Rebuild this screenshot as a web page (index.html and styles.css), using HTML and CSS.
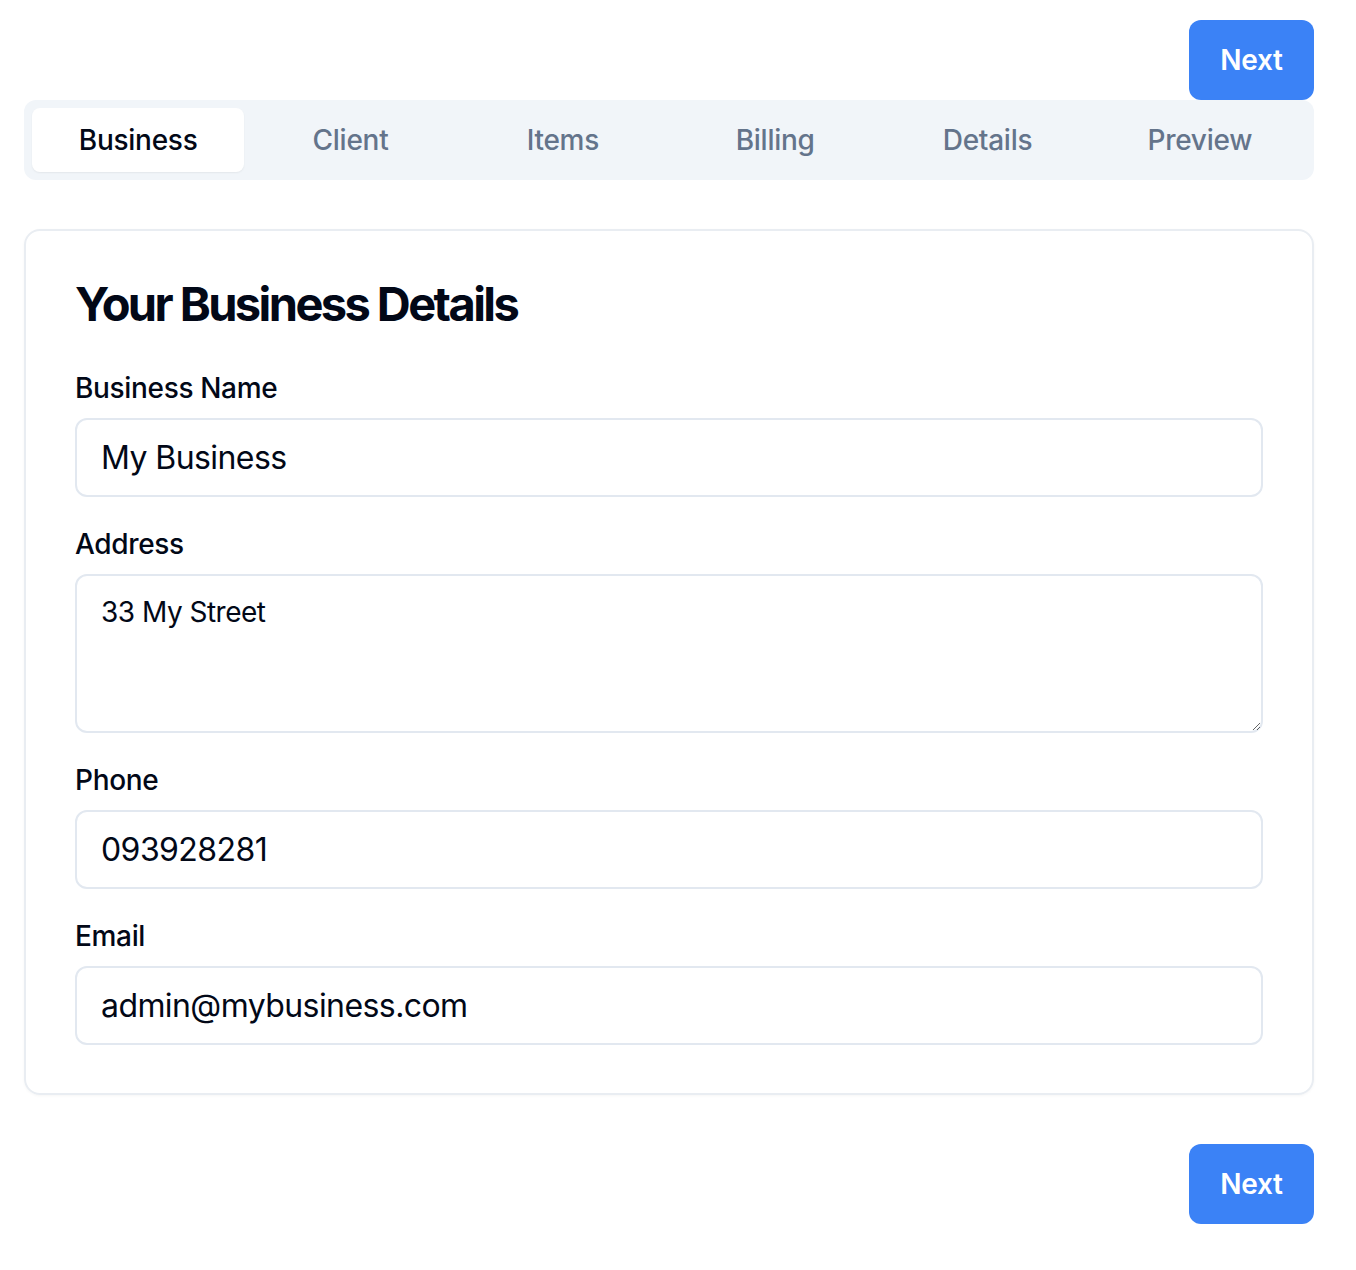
FILE: index.html
```html
<!DOCTYPE html>
<html lang="en">
<head>
    <meta charset="UTF-8">
    <meta name="viewport" content="width=device-width, initial-scale=1.0">
    <title>Invoice - Business</title>
    <link rel="stylesheet" href="styles.css">
</head>
<body>
    <div class="page">
        <div class="actions">
            <button class="btn-next" type="button">Next</button>
        </div>

        <!-- Steps of the invoice wizard -->
        <div class="tabs">
            <button class="tab active" type="button">Business</button>
            <button class="tab" type="button">Client</button>
            <button class="tab" type="button">Items</button>
            <button class="tab" type="button">Billing</button>
            <button class="tab" type="button">Details</button>
            <button class="tab" type="button">Preview</button>
        </div>

        <div class="card">
            <h2>Your Business Details</h2>
            <form class="fields">
                <div class="field">
                    <label for="name">Business Name</label>
                    <input type="text" id="name" value="My Business" />
                </div>
                <div class="field">
                    <label for="address">Address</label>
                    <textarea id="address">33 My Street</textarea>
                </div>
                <div class="field">
                    <label for="phone">Phone</label>
                    <input type="text" id="phone" value="093928281" />
                </div>
                <div class="field">
                    <label for="email">Email</label>
                    <input type="email" id="email" value="admin@mybusiness.com" />
                </div>
            </form>
        </div>

        <div class="actions bottom">
            <button class="btn-next" type="button">Next</button>
        </div>
    </div>
</body>
</html>
```

FILE: styles.css
```css
body {
    margin: 0;
    padding: 20px 42px 40px 24px;
    background: #ffffff;
    font-family: Inter, "Noto Sans", Arial, sans-serif;
    color: #020817;
}

.page {
    display: flex;
    flex-direction: column;
}

.actions {
    display: flex;
    justify-content: flex-end;
}

.actions.bottom {
    margin-top: 49px;
}

.btn-next {
    width: 125px;
    height: 80px;
    border: none;
    border-radius: 12px;
    background: #3b82f6;
    color: #ffffff;
    font-family: inherit;
    font-size: 28px;
    font-weight: 600;
    letter-spacing: -0.01em;
    cursor: pointer;
}

.btn-next:hover {
    background: #2563eb;
}

.tabs {
    display: grid;
    grid-template-columns: repeat(6, 1fr);
    height: 80px;
    padding: 8px;
    box-sizing: border-box;
    background: #f1f5f9;
    border-radius: 12px;
}

.tab {
    border: none;
    background: transparent;
    border-radius: 8px;
    font-family: inherit;
    font-size: 28px;
    font-weight: 500;
    letter-spacing: -0.01em;
    color: #64748b;
    cursor: pointer;
}

.tab.active {
    background: #ffffff;
    color: #020817;
    box-shadow: 0 1px 2px rgba(0, 0, 0, 0.06);
}

.card {
    margin-top: 49px;
    padding: 49px 49px 48px;
    border: 2px solid #e9edf2;
    border-radius: 16px;
    box-shadow: 0 1px 3px rgba(0, 0, 0, 0.04);
}

.card h2 {
    margin: 0 0 46px;
    font-size: 47px;
    line-height: 48px;
    font-weight: 700;
    letter-spacing: -0.055em;
}

.fields {
    display: flex;
    flex-direction: column;
    gap: 33px;
}

.field {
    display: flex;
    flex-direction: column;
    gap: 16px;
}

.field label {
    font-size: 28px;
    line-height: 28px;
    font-weight: 500;
    letter-spacing: -0.012em;
}

.field input,
.field textarea {
    box-sizing: border-box;
    width: 100%;
    border: 2px solid #e2e8f0;
    border-radius: 12px;
    background: #ffffff;
    color: #020817;
    font-family: inherit;
    letter-spacing: -0.018em;
    padding: 0 24px;
    margin: 0;
}

.field input {
    height: 79px;
    font-size: 32px;
}

.field textarea {
    height: 159px;
    padding-top: 16px;
    font-size: 28px;
    line-height: 40px;
    resize: vertical;
}
```
